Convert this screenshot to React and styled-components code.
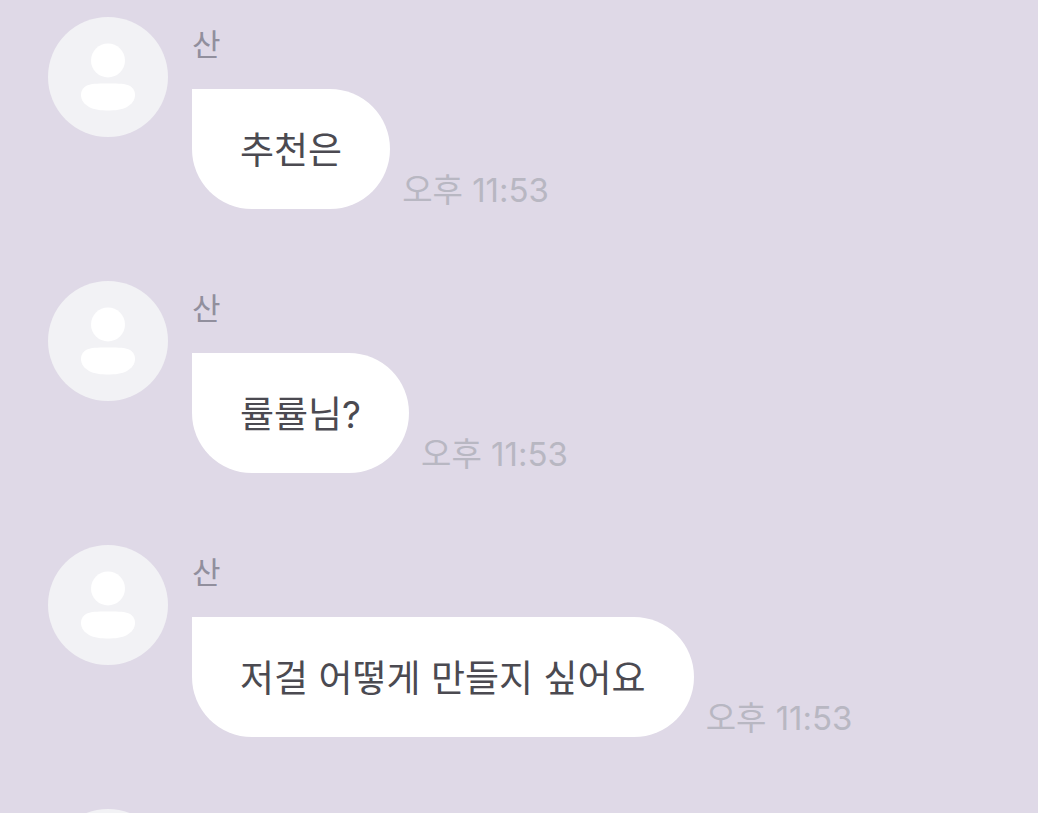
import React from "react";
import styled, { createGlobalStyle } from "styled-components";

const GlobalStyle = createGlobalStyle`
    body {
        margin: 0;
        background: #dfd9e7;
        font-family: Inter, "Noto Sans CJK KR", sans-serif;
    }
`;

const Chat = styled.ul`
    display: flex;
    flex-direction: column;
    gap: 72px;
    box-sizing: border-box;
    height: 100vh;
    margin: 0;
    padding: 17px 48px 0;
    overflow: hidden;
    list-style: none;
`;

const Message = styled.li`
    display: flex;
    align-items: flex-start;
    gap: 24px;
`;

const Avatar = styled.svg`
    flex: none;
    width: 120px;
    height: 120px;
`;

const Content = styled.div`
    flex: 1;
    min-width: 0;
`;

const Name = styled.p`
    margin: 0 0 16px;
    color: #918f9d;
    font-size: 31px;
    line-height: 56px;
`;

const BubbleRow = styled.div`
    display: flex;
    align-items: flex-end;
    gap: 12px;
`;

const Bubble = styled.p`
    margin: 0;
    padding: 34px 48px 30px;
    border-radius: 0 60px 60px 60px;
    background: #fff;
    color: #4b4a51;
    font-size: 37px;
    line-height: 56px;
`;

const Time = styled.time`
    flex: none;
    color: #b8b7c2;
    font-size: 33px;
    line-height: 38px;
`;

const messages = [
    { id: 1, name: "산", text: "추천은", time: "오후 11:53" },
    { id: 2, name: "산", text: "률률님?", time: "오후 11:53" },
    { id: 3, name: "산", text: "저걸 어떻게 만들지 싶어요", time: "오후 11:53" },
    { id: 4 }
];

const ProfileIcon = () => (
    <Avatar viewBox="0 0 120 120" aria-hidden="true">
        <circle cx="60" cy="60" r="60" fill="#f2f2f5" />
        <circle cx="60" cy="43.4" r="17" fill="#fff" />
        <path
            d="M60 66.5C72 66.5 77 66.7 81 68.5C85 70.3 87 74 87 78C87 83 84 87 79 90C74 92.8 67 93.5 60 93.5C53 93.5 46 92.8 41 90C36 87 33 83 33 78C33 74 35 70.3 39 68.5C43 66.7 48 66.5 60 66.5Z"
            fill="#fff"
        />
    </Avatar>
);

const App = () => {
    return (
        <>
            <GlobalStyle />
            <Chat lang="ko">
                {messages.map(({ id, name, text, time }) => (
                    <Message key={id}>
                        <ProfileIcon />
                        {text && (
                            <Content>
                                <Name>{name}</Name>
                                <BubbleRow>
                                    <Bubble>{text}</Bubble>
                                    <Time dateTime="23:53">{time}</Time>
                                </BubbleRow>
                            </Content>
                        )}
                    </Message>
                ))}
            </Chat>
        </>
    );
};

export default App;
